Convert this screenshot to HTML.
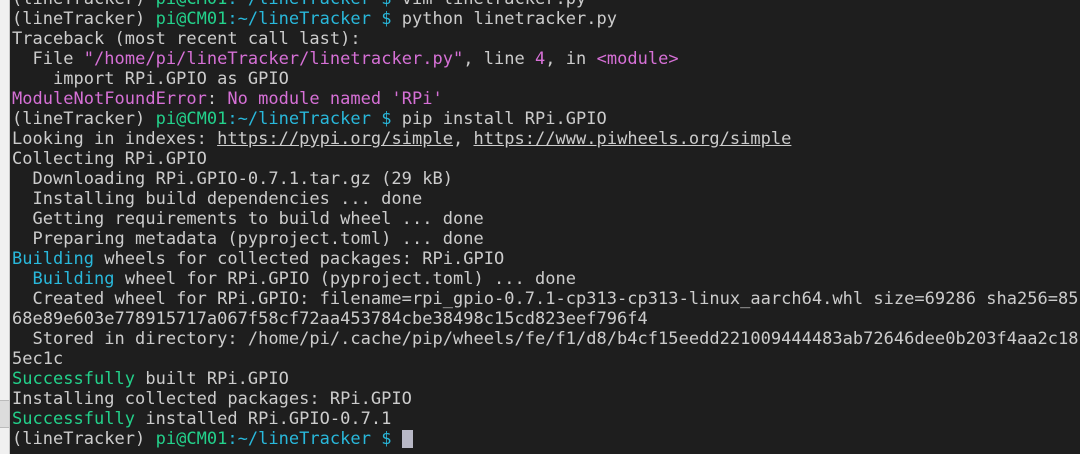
<!DOCTYPE html>
<html><head><meta charset="utf-8"><style>
html,body{margin:0;padding:0;width:1080px;height:454px;overflow:hidden;background:#1e1e1e}
.strip{position:absolute;left:0;top:0;width:9px;height:454px;background:#f0f0f0;border-right:1px solid #c8c8c8}
.strip .b{position:absolute;left:0;top:400px;width:9px;height:26px;background:#dcdcdc;border-top:1px solid #bbb;border-bottom:1px solid #bbb}
pre{position:absolute;left:12px;top:-11px;margin:0;font-family:"DejaVu Sans Mono","Liberation Mono",monospace;font-size:17px;line-height:20px;color:#cccccc;letter-spacing:0.02px;white-space:pre}
.g{color:#23d18b}.c{color:#29b8db}.m{color:#d670d6}.u{text-decoration:underline}
.cur{display:inline-block;width:11px;height:18px;background:#b8b8c6;vertical-align:-4px}
</style></head><body>
<div class="strip"><div class="b"></div></div>
<pre>(lineTracker) <span class="g">pi@CM01</span><span class="c">:~/lineTracker $</span> vim linetracker.py
(lineTracker) <span class="g">pi@CM01</span><span class="c">:~/lineTracker $</span> python linetracker.py
Traceback (most recent call last):
  File <span class="m">"/home/pi/lineTracker/linetracker.py"</span>, line <span class="m">4</span>, in <span class="m">&lt;module&gt;</span>
    import RPi.GPIO as GPIO
<span class="m">ModuleNotFoundError</span>: <span class="m">No module named 'RPi'</span>
(lineTracker) <span class="g">pi@CM01</span><span class="c">:~/lineTracker $</span> pip install RPi.GPIO
Looking in indexes: <span class="u">https://pypi.org/simple</span>, <span class="u">https://www.piwheels.org/simple</span>
Collecting RPi.GPIO
  Downloading RPi.GPIO-0.7.1.tar.gz (29 kB)
  Installing build dependencies ... done
  Getting requirements to build wheel ... done
  Preparing metadata (pyproject.toml) ... done
<span class="c">Building</span> wheels for collected packages: RPi.GPIO
  <span class="c">Building</span> wheel for RPi.GPIO (pyproject.toml) ... done
  Created wheel for RPi.GPIO: filename=rpi_gpio-0.7.1-cp313-cp313-linux_aarch64.whl size=69286 sha256=85
68e89e603e778915717a067f58cf72aa453784cbe38498c15cd823eef796f4
  Stored in directory: /home/pi/.cache/pip/wheels/fe/f1/d8/b4cf15eedd221009444483ab72646dee0b203f4aa2c18
5ec1c
<span class="g">Successfully</span> built RPi.GPIO
Installing collected packages: RPi.GPIO
<span class="g">Successfully</span> installed RPi.GPIO-0.7.1
(lineTracker) <span class="g">pi@CM01</span><span class="c">:~/lineTracker $</span> <span class="cur"></span></pre>
</body></html>
